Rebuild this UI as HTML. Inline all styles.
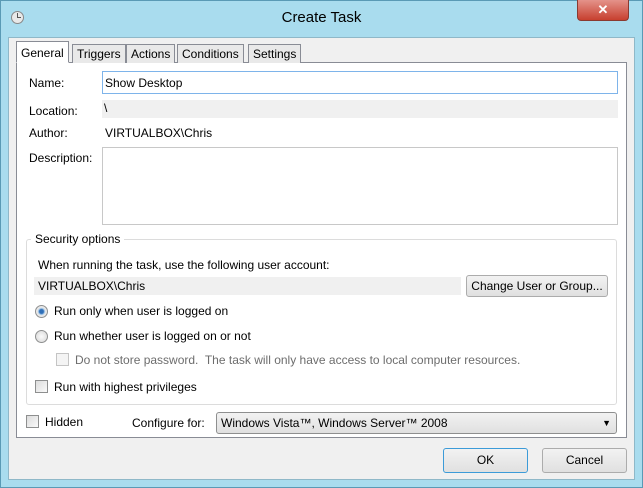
<!DOCTYPE html><html><head><style>
*{box-sizing:border-box;margin:0;padding:0}
body{width:643px;height:488px;overflow:hidden;font-family:"Liberation Sans",sans-serif;font-size:12px;color:#000;position:relative;background:#a9dcee}
.a{position:absolute;white-space:nowrap}
.win{position:absolute;left:0;top:0;width:643px;height:488px;background:#a9dcee;border:1px solid #5a9ab5}
.cont{position:absolute;left:8px;top:37px;width:627px;height:443px;background:#f0f0f0;border:1px solid #8fb8c8}
.panel{position:absolute;left:16px;top:62px;width:611px;height:376px;background:#fff;border:1px solid #898c95}
.tab{position:absolute;top:44px;height:19px;background:#e9e9e9;border:1px solid #898c95;border-bottom:none;padding:2px 4px 0;font-size:12px}
.inp{position:absolute;background:#fff;border:1px solid #abadb3}
.ro{position:absolute;background:#f0f0f0}
.btn{position:absolute;border:1px solid #acacac;border-radius:3px;background:linear-gradient(#f2f2f2,#e0e0e0);text-align:center}
.cb{position:absolute;width:13px;height:13px;border:1px solid #8e8f8f;background:linear-gradient(135deg,#dcdcdc,#fafafa)}
.rd{position:absolute;width:13px;height:13px;border:1px solid #8e8f8f;border-radius:50%;background:radial-gradient(#fafafa,#d6d6d6)}
</style></head><body>
<div class="win"></div>
<div class="a" style="left:11px;top:11px;width:13px;height:13px;border-radius:50%;border:1px solid #888;background:#e8e8e8"></div>
<div class="a" style="left:17px;top:13px;width:1px;height:5px;background:#555"></div>
<div class="a" style="left:17px;top:17px;width:4px;height:1px;background:#555"></div>
<div class="a" style="left:0;top:9px;width:643px;text-align:center;font-size:15px;color:#000">Create Task</div>
<div class="a" style="left:577px;top:0;width:52px;height:21px;background:linear-gradient(#e4928a,#c7402f);border:1px solid #8a3a30;border-top:none;border-radius:0 0 4px 4px;color:#fff;font-weight:bold;text-align:center;font-size:13px;line-height:20px">✕</div>
<div class="cont"></div>
<div class="panel"></div>
<div class="tab" style="left:16px;top:41px;height:22px;background:#fff;border-bottom:1px solid #fff;padding-top:4px">General</div>
<div class="tab" style="left:72px">Triggers</div>
<div class="tab" style="left:126px">Actions</div>
<div class="tab" style="left:177px">Conditions</div>
<div class="tab" style="left:248px">Settings</div>
<div class="a" style="left:29px;top:76px">Name:</div>
<div class="inp" style="left:102px;top:71px;width:516px;height:23px;border-color:#7eb4ea"></div>
<div class="a" style="left:105px;top:76px">Show Desktop</div>
<div class="a" style="left:29px;top:104px">Location:</div>
<div class="ro" style="left:102px;top:100px;width:516px;height:18px"></div>
<div class="a" style="left:104px;top:101px">\</div>
<div class="a" style="left:29px;top:126px">Author:</div>
<div class="a" style="left:105px;top:126px">VIRTUALBOX\Chris</div>
<div class="a" style="left:29px;top:151px">Description:</div>
<div class="inp" style="left:102px;top:147px;width:516px;height:78px;border-color:#c8c8c8"></div>
<div class="a" style="left:26px;top:239px;width:591px;height:166px;border:1px solid #dcdcdc;border-radius:3px"></div>
<div class="a" style="left:31px;top:232px;background:#fff;padding:0 4px">Security options</div>
<div class="a" style="left:38px;top:258px">When running the task, use the following user account:</div>
<div class="ro" style="left:34px;top:277px;width:427px;height:18px"></div>
<div class="a" style="left:38px;top:279px">VIRTUALBOX\Chris</div>
<div class="btn" style="left:466px;top:275px;width:142px;height:22px;line-height:20px">Change User or Group...</div>
<div class="rd" style="left:35px;top:305px;background:radial-gradient(#2f6fb8 2px,#9cc2e6 3px,#e8e8e8 4px)"></div>
<div class="a" style="left:54px;top:304px">Run only when user is logged on</div>
<div class="rd" style="left:35px;top:330px"></div>
<div class="a" style="left:54px;top:329px">Run whether user is logged on or not</div>
<div class="cb" style="left:56px;top:353px;border-color:#c4c4c4;background:#f4f4f4"></div>
<div class="a" style="left:75px;top:353px;color:#6d6d6d">Do not store password.&nbsp; The task will only have access to local computer resources.</div>
<div class="cb" style="left:35px;top:380px"></div>
<div class="a" style="left:54px;top:380px">Run with highest privileges</div>
<div class="cb" style="left:26px;top:415px"></div>
<div class="a" style="left:45px;top:415px">Hidden</div>
<div class="a" style="left:132px;top:416px">Configure for:</div>
<div class="btn" style="left:216px;top:412px;width:401px;height:22px;border-color:#8e8f8f;text-align:left;padding-left:4px;line-height:20px">Windows Vista™, Windows Server™ 2008<span style="position:absolute;right:5px;font-size:9px">▼</span></div>
<div class="btn" style="left:443px;top:448px;width:85px;height:25px;line-height:23px;border-color:#3c9bd8">OK</div>
<div class="btn" style="left:542px;top:448px;width:85px;height:25px;line-height:23px">Cancel</div>
</body></html>
